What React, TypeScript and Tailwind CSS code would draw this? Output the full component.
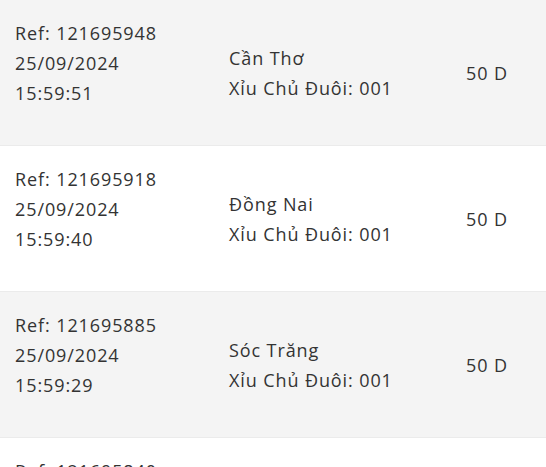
import React from "react";

type Bet = {
  ref: string;
  date: string;
  time: string;
  province: string;
  detail: string;
  amount: string;
};

const bets: Bet[] = [
  { ref: "121695948", date: "25/09/2024", time: "15:59:51", province: "Cần Thơ", detail: "Xỉu Chủ Đuôi: 001", amount: "50 D" },
  { ref: "121695918", date: "25/09/2024", time: "15:59:40", province: "Đồng Nai", detail: "Xỉu Chủ Đuôi: 001", amount: "50 D" },
  { ref: "121695885", date: "25/09/2024", time: "15:59:29", province: "Sóc Trăng", detail: "Xỉu Chủ Đuôi: 001", amount: "50 D" },
  { ref: "121695840", date: "25/09/2024", time: "15:59:18", province: "Cần Thơ", detail: "Xỉu Chủ Đuôi: 001", amount: "50 D" },
];

export default function App() {
  return (
    <div className="w-[546px] h-[467px] overflow-hidden bg-white font-['Open_Sans','Noto_Sans',sans-serif] text-[18px] leading-[30px] tracking-[0.9px] text-[#333]">
      {bets.map((bet, i) => (
        <div
          key={bet.ref}
          className={`flex h-[146px] items-center border-b border-[#ebebeb] ${i % 2 === 0 ? "bg-[#f4f4f4]" : "bg-white"}`}
        >
          <div className="w-[229px] shrink-0 self-start pl-[15px] pt-[18px]">
            <div>Ref: {bet.ref}</div>
            <div>{bet.date}</div>
            <div>{bet.time}</div>
          </div>
          <div className="w-[237px] shrink-0">
            <div>{bet.province}</div>
            <div>{bet.detail}</div>
          </div>
          <div>{bet.amount}</div>
        </div>
      ))}
    </div>
  );
}
